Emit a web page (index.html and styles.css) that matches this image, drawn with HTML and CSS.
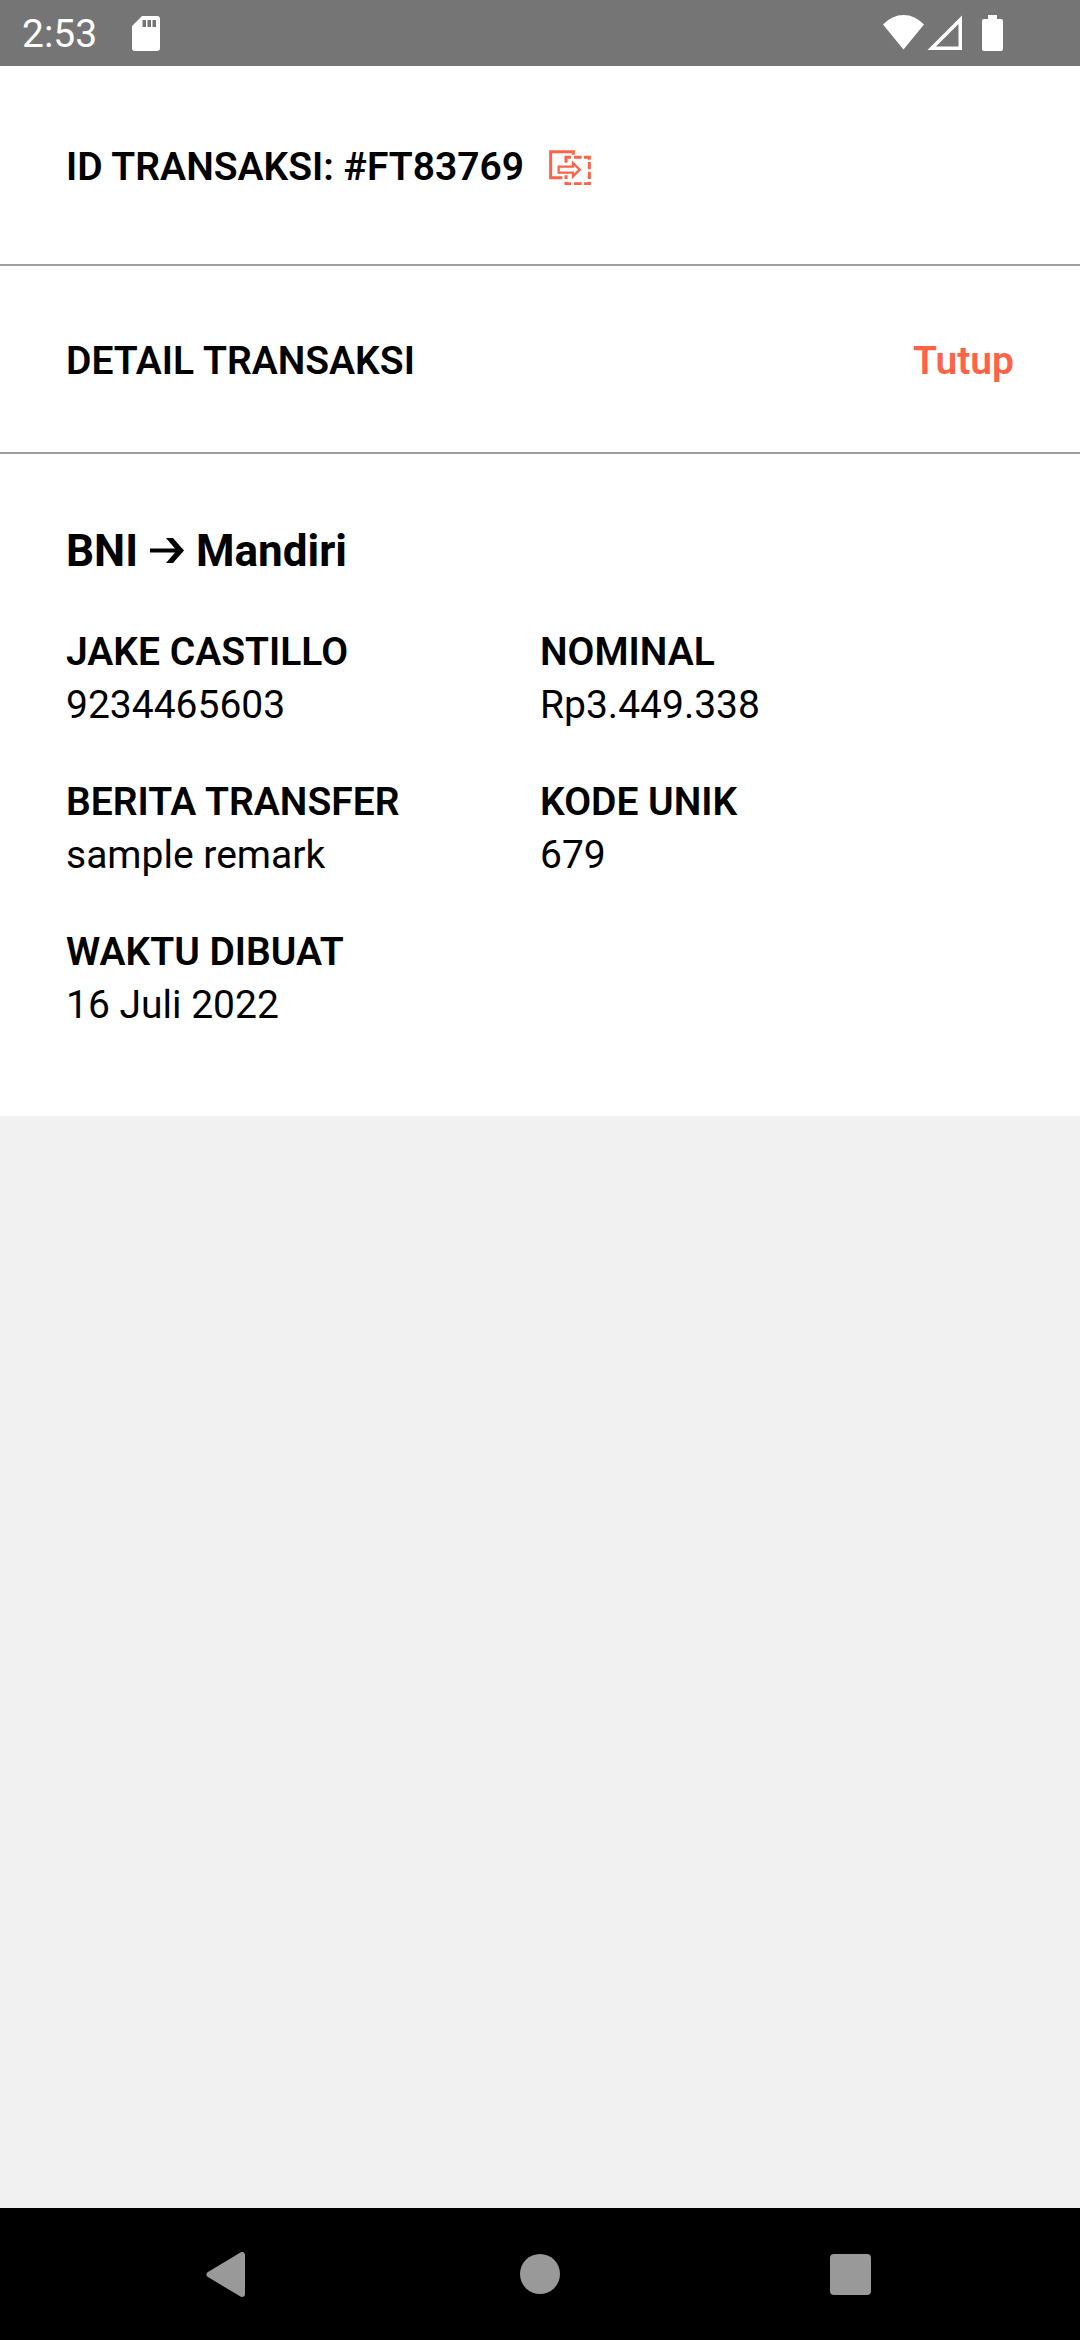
FILE: index.html
```html
<!DOCTYPE html>
<html lang="id">
<head>
<meta charset="utf-8">
<meta name="viewport" content="width=device-width, initial-scale=1">
<title>Detail Transaksi</title>
<link rel="stylesheet" href="styles.css">
</head>
<body>
<header class="status">
  <div class="status-group">
    <span class="clock">2:53</span>
    <svg class="sd-icon" width="28" height="35" viewBox="0 0 28 35" aria-hidden="true"><path fill="#fff" fill-rule="evenodd" d="M10 0H25a3 3 0 0 1 3 3V32a3 3 0 0 1-3 3H3a3 3 0 0 1-3-3V10ZM10.500 4v7h3.500V4ZM15.500 4v7h3.500V4ZM20.500 4v7h3.500V4Z"/></svg>
  </div>
  <svg class="signal-icons" width="120" height="36" viewBox="0 0 120 36" fill="#fff" aria-hidden="true">
    <path d="M0 9.500Q9 0 20.500 0T41 9.500L20.500 34.500Z"/>
    <path fill-rule="evenodd" d="M79 .5V35H44.500ZM75.500 9L53 31.500H75.500Z"/>
    <path d="M105 0h9v4h4a2 2 0 0 1 2 2V34a2 2 0 0 1-2 2H101a2 2 0 0 1-2-2V6a2 2 0 0 1 2-2h4Z"/>
  </svg>
</header>
<main class="content">
  <section class="card">
    <div class="row row-id">
      <h1 class="label">ID TRANSAKSI: #FT83769</h1>
      <button class="copy" type="button" aria-label="Salin ID transaksi">
        <svg width="42" height="35" viewBox="0 0 126 105" fill="none" stroke="#ff6347" stroke-width="9" aria-hidden="true">
          <path d="M40 83H5V5H73V14"/>
          <path d="M51 38V22H66M75 22H98M105 22H121V29M121 36V58M121 65V87M121 95V101H105M98 101H75M66 101H51V95M51 87V76"/>
          <path stroke-width="7" d="M29 50H72V39L92 59L72 79V68H29Z"/>
        </svg>
      </button>
    </div>
    <div class="row">
      <h2 class="label">DETAIL TRANSAKSI</h2>
      <button class="close" type="button">Tutup</button>
    </div>
    <div class="detail">
      <h3 class="route">BNI
        <svg class="arrow" width="34" height="26" viewBox="0 0 34 26" role="img" aria-label="ke"><path d="M0 10.500H25L16 0H23L34 12.500L23 25H16L25 14.500H0Z"/></svg>
        Mandiri</h3>
      <dl class="fields">
        <div class="field"><dt>JAKE CASTILLO</dt><dd>9234465603</dd></div>
        <div class="field"><dt>NOMINAL</dt><dd>Rp3.449.338</dd></div>
        <div class="field"><dt>BERITA TRANSFER</dt><dd>sample remark</dd></div>
        <div class="field"><dt>KODE UNIK</dt><dd>679</dd></div>
        <div class="field"><dt>WAKTU DIBUAT</dt><dd>16 Juli 2022</dd></div>
      </dl>
    </div>
  </section>
</main>
<nav class="navbar">
  <button type="button" aria-label="Kembali"><svg width="46" height="46" viewBox="0 0 46 46" aria-hidden="true"><path fill="#999" stroke="#999" stroke-width="6" stroke-linejoin="round" d="M4.500 23.500L37 4V43Z"/></svg></button>
  <button type="button" aria-label="Beranda"><svg width="46" height="46" viewBox="0 0 46 46" aria-hidden="true"><circle cx="23" cy="23" r="20" fill="#999"/></svg></button>
  <button type="button" aria-label="Aplikasi terbaru"><svg width="46" height="46" viewBox="0 0 46 46" aria-hidden="true"><rect x="1" y="3" width="41" height="41" rx="4" fill="#999"/></svg></button>
</nav>
</body>
</html>
```
FILE: styles.css
```css
* {
  box-sizing: border-box;
}

body {
  margin: 0;
  min-height: 100vh;
  display: flex;
  flex-direction: column;
  background: #f1f1f1;
  color: #000;
  font-family: Roboto, "Noto Sans", sans-serif;
  font-size: 39px;
  line-height: 53px;
}

button {
  margin: 0;
  padding: 0;
  border: 0;
  background: none;
  font: inherit;
  cursor: pointer;
}

svg {
  display: block;
}

.status {
  display: flex;
  justify-content: space-between;
  align-items: center;
  height: 66px;
  padding: 0 77px 0 22px;
  background: #757575;
  color: #fff;
}

.status-group {
  display: flex;
  align-items: center;
  gap: 35px;
}

.clock {
  padding-top: 2px;
}

.content {
  flex: 1;
}

.card {
  background: #fff;
}

.row {
  display: flex;
  align-items: center;
  justify-content: space-between;
  padding: 69px 66px 64px;
  border-bottom: 2px solid #9e9e9e;
}

.row-id {
  min-height: 200px;
  justify-content: flex-start;
  gap: 25px;
}

.label,
.fields dt {
  margin: 0;
  font-size: 39px;
  font-weight: 600;
}

.close {
  color: #ff6347;
  font-weight: 600;
}

.detail {
  padding: 68px 66px 62px;
}

.route {
  display: flex;
  align-items: center;
  gap: 12px;
  margin: 0;
  font-size: 44px;
  font-weight: 700;
  line-height: 58px;
}

.fields {
  display: grid;
  grid-template-columns: 1fr 1fr;
  margin: 24px 0 0;
}

.field {
  padding: 22px 0;
}

.fields dd {
  margin: 0;
}

.navbar {
  display: flex;
  justify-content: center;
  gap: 266px;
  height: 132px;
  background: #000;
}
```
